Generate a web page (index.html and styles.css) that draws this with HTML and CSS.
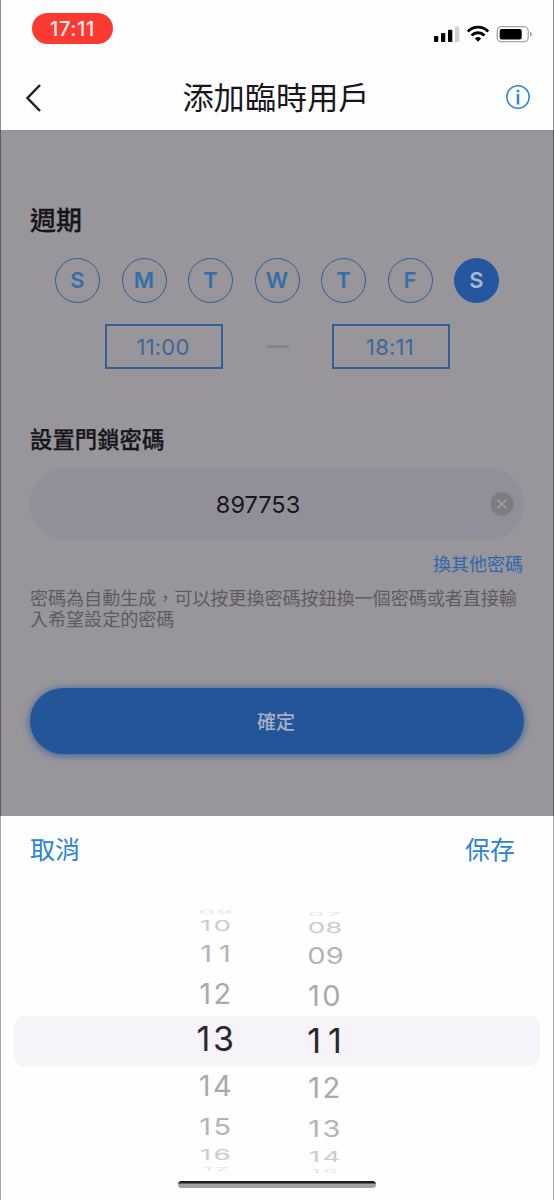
FILE: index.html
```html
<!DOCTYPE html>
<html lang="zh-Hant">
<head>
<meta charset="utf-8">
<title>添加臨時用戶</title>
<link rel="stylesheet" href="styles.css">
</head>
<body>
<div class="phone">
  <header class="top">
    <div class="status">
      <span class="clock">17:11</span>
      <svg class="indicators" width="100" height="20" viewBox="0 0 100 20">
        <rect x="0" y="11" width="4.3" height="6" rx="1"/>
        <rect x="7" y="8" width="4.3" height="9" rx="1"/>
        <rect x="14" y="4.700" width="4.300" height="12.300" rx="1"/>
        <rect x="21" y="1.500" width="4.300" height="15.500" rx="1" fill="#d2d2d2"/>
        <g fill="none" stroke="#000" stroke-width="2.800">
          <path d="M33.800 6.500a14.200 14.200 0 0 1 20.400 0"/>
          <path d="M37.600 10.400a9 9 0 0 1 12.800 0"/>
        </g>
        <path d="M40.900 13.500a4.500 4.500 0 0 1 6.200 0L44 16.800z"/>
        <rect x="63.200" y="1.700" width="31" height="15" rx="4.200" fill="none" stroke="#a5a5a5" stroke-width="1.300"/>
        <rect x="65.700" y="4" width="22" height="10.400" rx="2"/>
        <path d="M96 6.800q2 .6 2 2.500t-2 2.500z" fill="#a5a5a5"/>
      </svg>
    </div>
    <div class="navbar">
      <svg class="back" width="18" height="30" viewBox="0 0 18 30"><path d="M16 2 3.500 15 16 28" fill="none" stroke="#222" stroke-width="2.500"/></svg>
      <h1 class="title">添加臨時用戶</h1>
      <svg class="info" width="26" height="26" viewBox="0 0 26 26"><circle cx="13" cy="12" r="11.200" fill="none" stroke="#2b86dc" stroke-width="1.500"/><circle cx="13" cy="6" r="1.500" fill="#2b86dc"/><path d="M13 9v10.500" stroke="#2b86dc" stroke-width="2.500"/></svg>
    </div>
  </header>

  <main class="form">
    <h2 class="heading">週期</h2>
    <div class="days">
      <span class="day">S</span><span class="day">M</span><span class="day">T</span><span class="day">W</span><span class="day">T</span><span class="day">F</span><span class="day day-on">S</span>
    </div>
    <div class="times">
      <span class="time">11:00</span><span class="dash"></span><span class="time">18:11</span>
    </div>
    <h3 class="subheading">設置門鎖密碼</h3>
    <div class="field">
      <span class="code">897753</span>
      <svg class="clear" width="24" height="24" viewBox="0 0 24 24"><circle cx="12" cy="12" r="11.700" fill="#7d7c83"/><path d="m7.500 7.500 9 9m0-9-9 9" stroke="#a09fa6" stroke-width="1.700"/></svg>
    </div>
    <a class="swap">換其他密碼</a>
    <p class="hint">密碼為自動生成，可以按更換密碼按鈕換一個密碼或者直接輸入希望設定的密碼</p>
    <button class="confirm">確定</button>
  </main>

  <section class="sheet">
    <div class="actions"><span>取消</span><span>保存</span></div>
    <div class="picker">
      <div class="wheel hours">
        <span class="r4 top-edge"><b>09</b></span><span class="r3"><b>10</b></span><span class="r2"><b class="ones">11</b></span><span class="r1"><b>12</b></span><span class="r0"><b>13</b></span><span class="r1 below"><b>14</b></span><span class="r2"><b>15</b></span><span class="r3 below"><b>16</b></span><span class="r4"><b>17</b></span>
      </div>
      <div class="wheel minutes">
        <span class="r4 top-edge"><b>07</b></span><span class="r3"><b class="wide">08</b></span><span class="r2"><b class="wide">09</b></span><span class="r1"><b>10</b></span><span class="r0"><b class="ones">11</b></span><span class="r1 below"><b>12</b></span><span class="r2"><b>13</b></span><span class="r3 below"><b>14</b></span><span class="r4"><b>15</b></span>
      </div>
    </div>
    <div class="home"></div>
  </section>
</div>
</body>
</html>
```
FILE: styles.css
```css
* { box-sizing: border-box; }
body { margin: 0; font-family: Inter, "Noto Sans CJK TC", sans-serif; color: #17161d; }
h1, h2, h3, p { margin: 0; }
.phone { width: 554px; height: 1200px; display: flex; flex-direction: column; overflow: hidden; background: #fefefe; }
.top { height: 130px; flex: none; border: solid #8d8c90; border-width: 0 1px; }
.status { height: 65px; padding: 13px 19px 0 31px; display: flex; justify-content: space-between; }
.clock { width: 81px; height: 31px; border-radius: 16px; background: #fd3a32; color: #fff0ee; font-size: 20px; font-weight: 500; line-height: 32px; text-align: center; letter-spacing: .7px; }
.indicators { margin-top: 12px; }
.navbar { height: 65px; display: flex; align-items: center; justify-content: space-between; padding: 0 22px 0 23px; }
.title { font-size: 31.200px; font-weight: 400; line-height: 40px; padding: 1px 0 0 5px; }
.form { height: 686px; flex: none; padding: 71px 29px 0; background: #98969b; border: solid #5b5a5f; border-width: 0 1px; }
.heading { font-size: 26px; font-weight: 500; line-height: 40px; -webkit-text-stroke: .3px; }
.days { display: flex; justify-content: space-between; padding: 0 25px; margin-top: 17px; }
.day { width: 45px; height: 45px; border: 1.500px solid #315e9b; border-radius: 50%; color: #346ea9; font-size: 22px; font-weight: 600; line-height: 43px; text-align: center; }
.day-on { background: #2457a0; color: #a9b7ce; border-color: #2457a0; }
.times { display: flex; align-items: center; justify-content: space-between; padding: 0 74px 0 75px; margin-top: 21px; }
.time { width: 118px; height: 45px; border: 2px solid #315f9c; color: #3c6898; font-size: 22px; line-height: 42px; text-align: center; padding-right: 2px; letter-spacing: .2px; }
.dash { width: 22px; height: 3px; background: #86848a; }
.subheading { margin-top: 55px; font-size: 22.400px; font-weight: 500; line-height: 32px; -webkit-text-stroke: .3px; }
.field { height: 74px; margin-top: 11px; border-radius: 37px; background: #918f99; display: flex; align-items: center; padding: 0 10px 0 4px; }
.code { flex: 1; text-align: center; font-size: 23.500px; padding-right: 8px; }
.swap { display: block; margin-top: 11px; color: #2e67ab; font-size: 18px; line-height: 26px; text-align: right; padding-right: 1px; }
.hint { margin-top: 10px; font-size: 18.050px; line-height: 21px; color: #5d5b61; }
.confirm { display: block; width: 494px; height: 66px; margin-top: 58px; border: 0; border-radius: 33px; background: #245598; color: #a7b0c0; font: 500 19px/66px "Noto Sans CJK TC", sans-serif; padding: 0 2px 0 0; box-shadow: 0 1px 9px #315d98; }
.sheet { height: 384px; flex: none; border: solid #a7a6aa; border-width: 0 1px; }
.actions { height: 91px; display: flex; justify-content: space-between; padding: 16px 38px 0 29px; color: #2b83d7; font-size: 25px; line-height: 36px; }
.picker { height: 266px; display: flex; padding: 0 13px; }
.picker::before { content: ""; width: 526px; height: 50px; flex: none; margin: 109px -526px 0 0; border-radius: 10px; background: #f6f4f8; }
.wheel { display: flex; flex-direction: column; flex: none; width: 109px; position: relative; padding-top: 1px; }
.hours { margin-left: 148px; }
.minutes { padding-top: 3px; }
.wheel span { display: flex; align-items: center; justify-content: center; flex: none; color: #aaa; font-size: 29px; letter-spacing: 2.500px; }
.wheel b { font-weight: 400; line-height: 1; }
.wheel .ones { letter-spacing: 7px; margin-right: -5px; }
.wheel .wide { letter-spacing: 0; }
.wheel .r0 { height: 48px; color: #29282c; font-size: 34px; }
.r1 { height: 44px; }
.r1.below { height: 45px; }
.r2 { height: 36px; }
.r2 b { transform: scale(1, .8); color: #b4b4b4; }
.r3 { height: 19px; }
.r3.below { height: 21px; }
.r3 b { transform: scale(.96, .5); color: #ccc; }
.r4 { height: 9px; }
.r4 b { transform: scale(.88, .16); color: #e6e6e6; }
.r4.top-edge { height: 8px; }
.home { width: 198px; height: 7px; margin: 8px 0 0 177px; border-radius: 4px; background: linear-gradient(#1d1d1d 0 2px, #a2a2a2 3px); }
```
